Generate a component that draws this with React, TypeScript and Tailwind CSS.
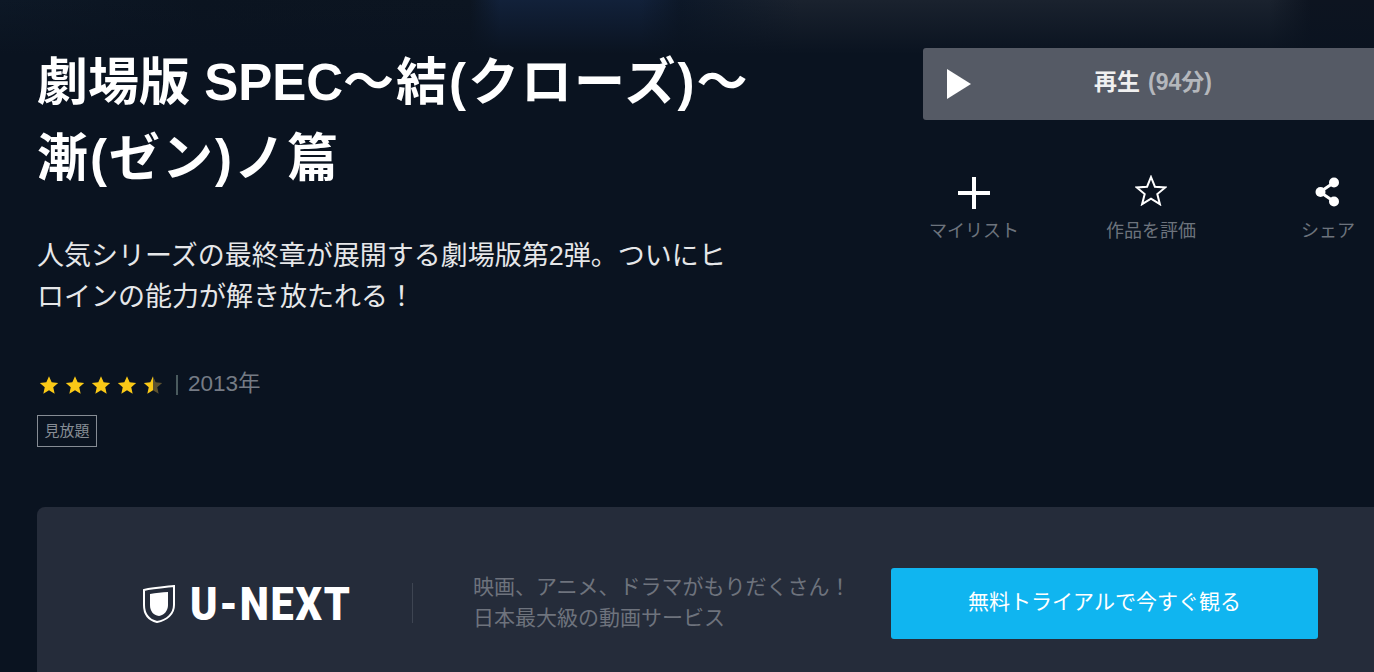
import React from "react";

const font = "font-['Liberation_Sans','Noto_Sans_CJK_JP',sans-serif]";

function RatingStars() {
  return (
    <div className="flex items-center gap-[6px] pl-[2px]">
      {[0, 1, 2, 3].map((i) => (
        <svg key={i} width="20" height="20" viewBox="0 0 24 24">
          <path d="M12 1.5l3.2 7.2 7.8.8-5.9 5.2 1.7 7.7L12 18.4l-6.8 4 1.7-7.7L1 9.5l7.8-.8z" fill="#fac917" />
        </svg>
      ))}
      <svg width="20" height="20" viewBox="0 0 24 24">
        <path d="M12 1.5l3.2 7.2 7.8.8-5.9 5.2 1.7 7.7L12 18.4z" fill="#5c5130" />
        <path d="M12 1.5L8.8 8.7 1 9.5l5.9 5.2-1.7 7.7 6.8-4z" fill="#fac917" />
      </svg>
    </div>
  );
}

function ActionItem({ icon, label }: { icon: React.ReactNode; label: string }) {
  return (
    <div className="flex w-[120px] flex-col items-center">
      <div className="flex h-[36px] items-center justify-center text-white">{icon}</div>
      <span className="mt-[8px] text-[18px] leading-[26px] text-[#6d737d]">{label}</span>
    </div>
  );
}

export default function App() {
  return (
    <div className={`relative h-[672px] w-[1374px] overflow-hidden bg-[#0a1320] ${font}`}>
      {/* blurred key art fading out at the top of the page */}
      <div className="absolute inset-x-0 top-0 h-[54px] bg-[linear-gradient(90deg,#0d1826_0px,#0b1420_200px,#0c1521_470px,#12213a_500px,#12213a_640px,#0d1828_680px,#1a222e_800px,#1a222e_1270px,#0d1420_1310px)]">
        <div className="h-full w-full bg-gradient-to-b from-transparent to-[#0a1320]" />
      </div>
      <div className="relative flex pl-[37px] pt-[48px]">
        <div className="w-[886px] shrink-0">
          <h1 className="-mt-[3px] text-[51px] leading-[76px] font-bold text-white">
            <span className="block">
              劇場版 SPEC<span className="tracking-[2px]">〜結(クローズ)〜</span>
            </span>
            <span className="block tracking-[2px]">漸(ゼン)ノ篇</span>
          </h1>
          <p className="mt-[39px] w-[700px] text-[27px] leading-[41px] text-[#e6e7e9]">
            人気シリーズの最終章が展開する劇場版第2弾。ついにヒロインの能力が解き放たれる！
          </p>
          <div className="mt-[54px] flex items-center">
            <RatingStars />
            <span className="ml-[13px] mr-[10px] h-[20px] w-[2px] bg-[#4a5a5e]" />
            <span className="-mt-[2px] text-[22.5px] leading-[28px] text-[#757b85]">2013年</span>
          </div>
          <span className="mt-[17px] block w-[60px] border border-[#868c94] py-[3px] text-center text-[15px] leading-[24px] text-[#868c94]">
            見放題
          </span>
        </div>
        <div className="min-w-0 grow">
          <div className="relative flex h-[72px] w-[470px] items-center justify-center rounded-l-[3px] bg-[#555a65] pb-[3px] pr-[10px] text-[23px] font-bold">
            <svg className="absolute left-[24px] top-[21px]" width="24" height="30" viewBox="0 0 24 30">
              <path d="M0 0L24 15L0 30z" fill="#fff" />
            </svg>
            <span className="text-[#f0f0f0]">再生</span>
            <span className="ml-[8px] text-[#b4b7bc]">(94分)</span>
          </div>
          <div className="mt-[54px] -ml-[9px] flex w-[480px] gap-[57px]">
            <ActionItem
              icon={
                <svg className="mt-[2px]" width="32" height="32" viewBox="0 0 32 32">
                  <path d="M14 0h4v14h14v4H18v14h-4V18H0v-4h14z" fill="#fff" />
                </svg>
              }
              label="マイリスト"
            />
            <ActionItem
              icon={
                <svg className="-mt-[3px]" width="32" height="31" viewBox="0 0 32 31">
                  <path
                    d="M16 2l3.9 9.7 10.4.7-8 6.7 2.6 10.1L16 23.6l-8.9 5.6 2.6-10.1-8-6.7 10.4-.7z"
                    fill="none"
                    stroke="#fff"
                    strokeWidth="2"
                    strokeLinejoin="miter"
                  />
                </svg>
              }
              label="作品を評価"
            />
            <ActionItem
              icon={
                <svg width="28" height="30" viewBox="0 0 28 30">
                  <path d="M20 5.5L6 15l14 9.5" stroke="#fff" strokeWidth="3" fill="none" />
                  <circle cx="20" cy="5.5" r="5" fill="#fff" />
                  <circle cx="6.5" cy="15" r="5" fill="#fff" />
                  <circle cx="20" cy="24.5" r="5" fill="#fff" />
                </svg>
              }
              label="シェア"
            />
          </div>
        </div>
      </div>
      <div className="absolute left-[37px] top-[507px] flex h-[190px] w-[1400px] items-start rounded-[8px] bg-[#252c3a] pl-[105px] pt-[61px]">
        <div className="flex h-[71px] w-[270px] items-center">
          <svg width="34" height="38" viewBox="0 0 34 38">
            <path d="M2 5C11 3 23 2 32 1V20C32 29 25 35 15 37C7 35 2 29 2 20z" fill="none" stroke="#fff" strokeWidth="2" />
            <path d="M8 9C14 8 20 7 26 7V20C26 26 22 30 17 31C11 30 8 26 8 20z" fill="#fff" />
          </svg>
          <span className="ml-[14px] origin-left scale-x-[0.9] text-[46px] leading-none font-black tracking-[2px] text-white font-['Roboto',sans-serif]">U-NEXT</span>
        </div>
        <div className="mt-[15px] h-[40px] w-px bg-[#3e4552]" />
        <div className="ml-[60px] mt-[3px] w-[399px] text-[21px] leading-[31px] text-[#6e737d]">
          <div>映画、アニメ、ドラマがもりだくさん！</div>
          <div>日本最大級の動画サービス</div>
        </div>
        <div className="ml-[19px] flex h-[71px] w-[427px] items-center justify-center rounded-[3px] bg-[#10b5f0] pb-[3px] text-[21px] text-white">
          無料トライアルで今すぐ観る
        </div>
      </div>
    </div>
  );
}
